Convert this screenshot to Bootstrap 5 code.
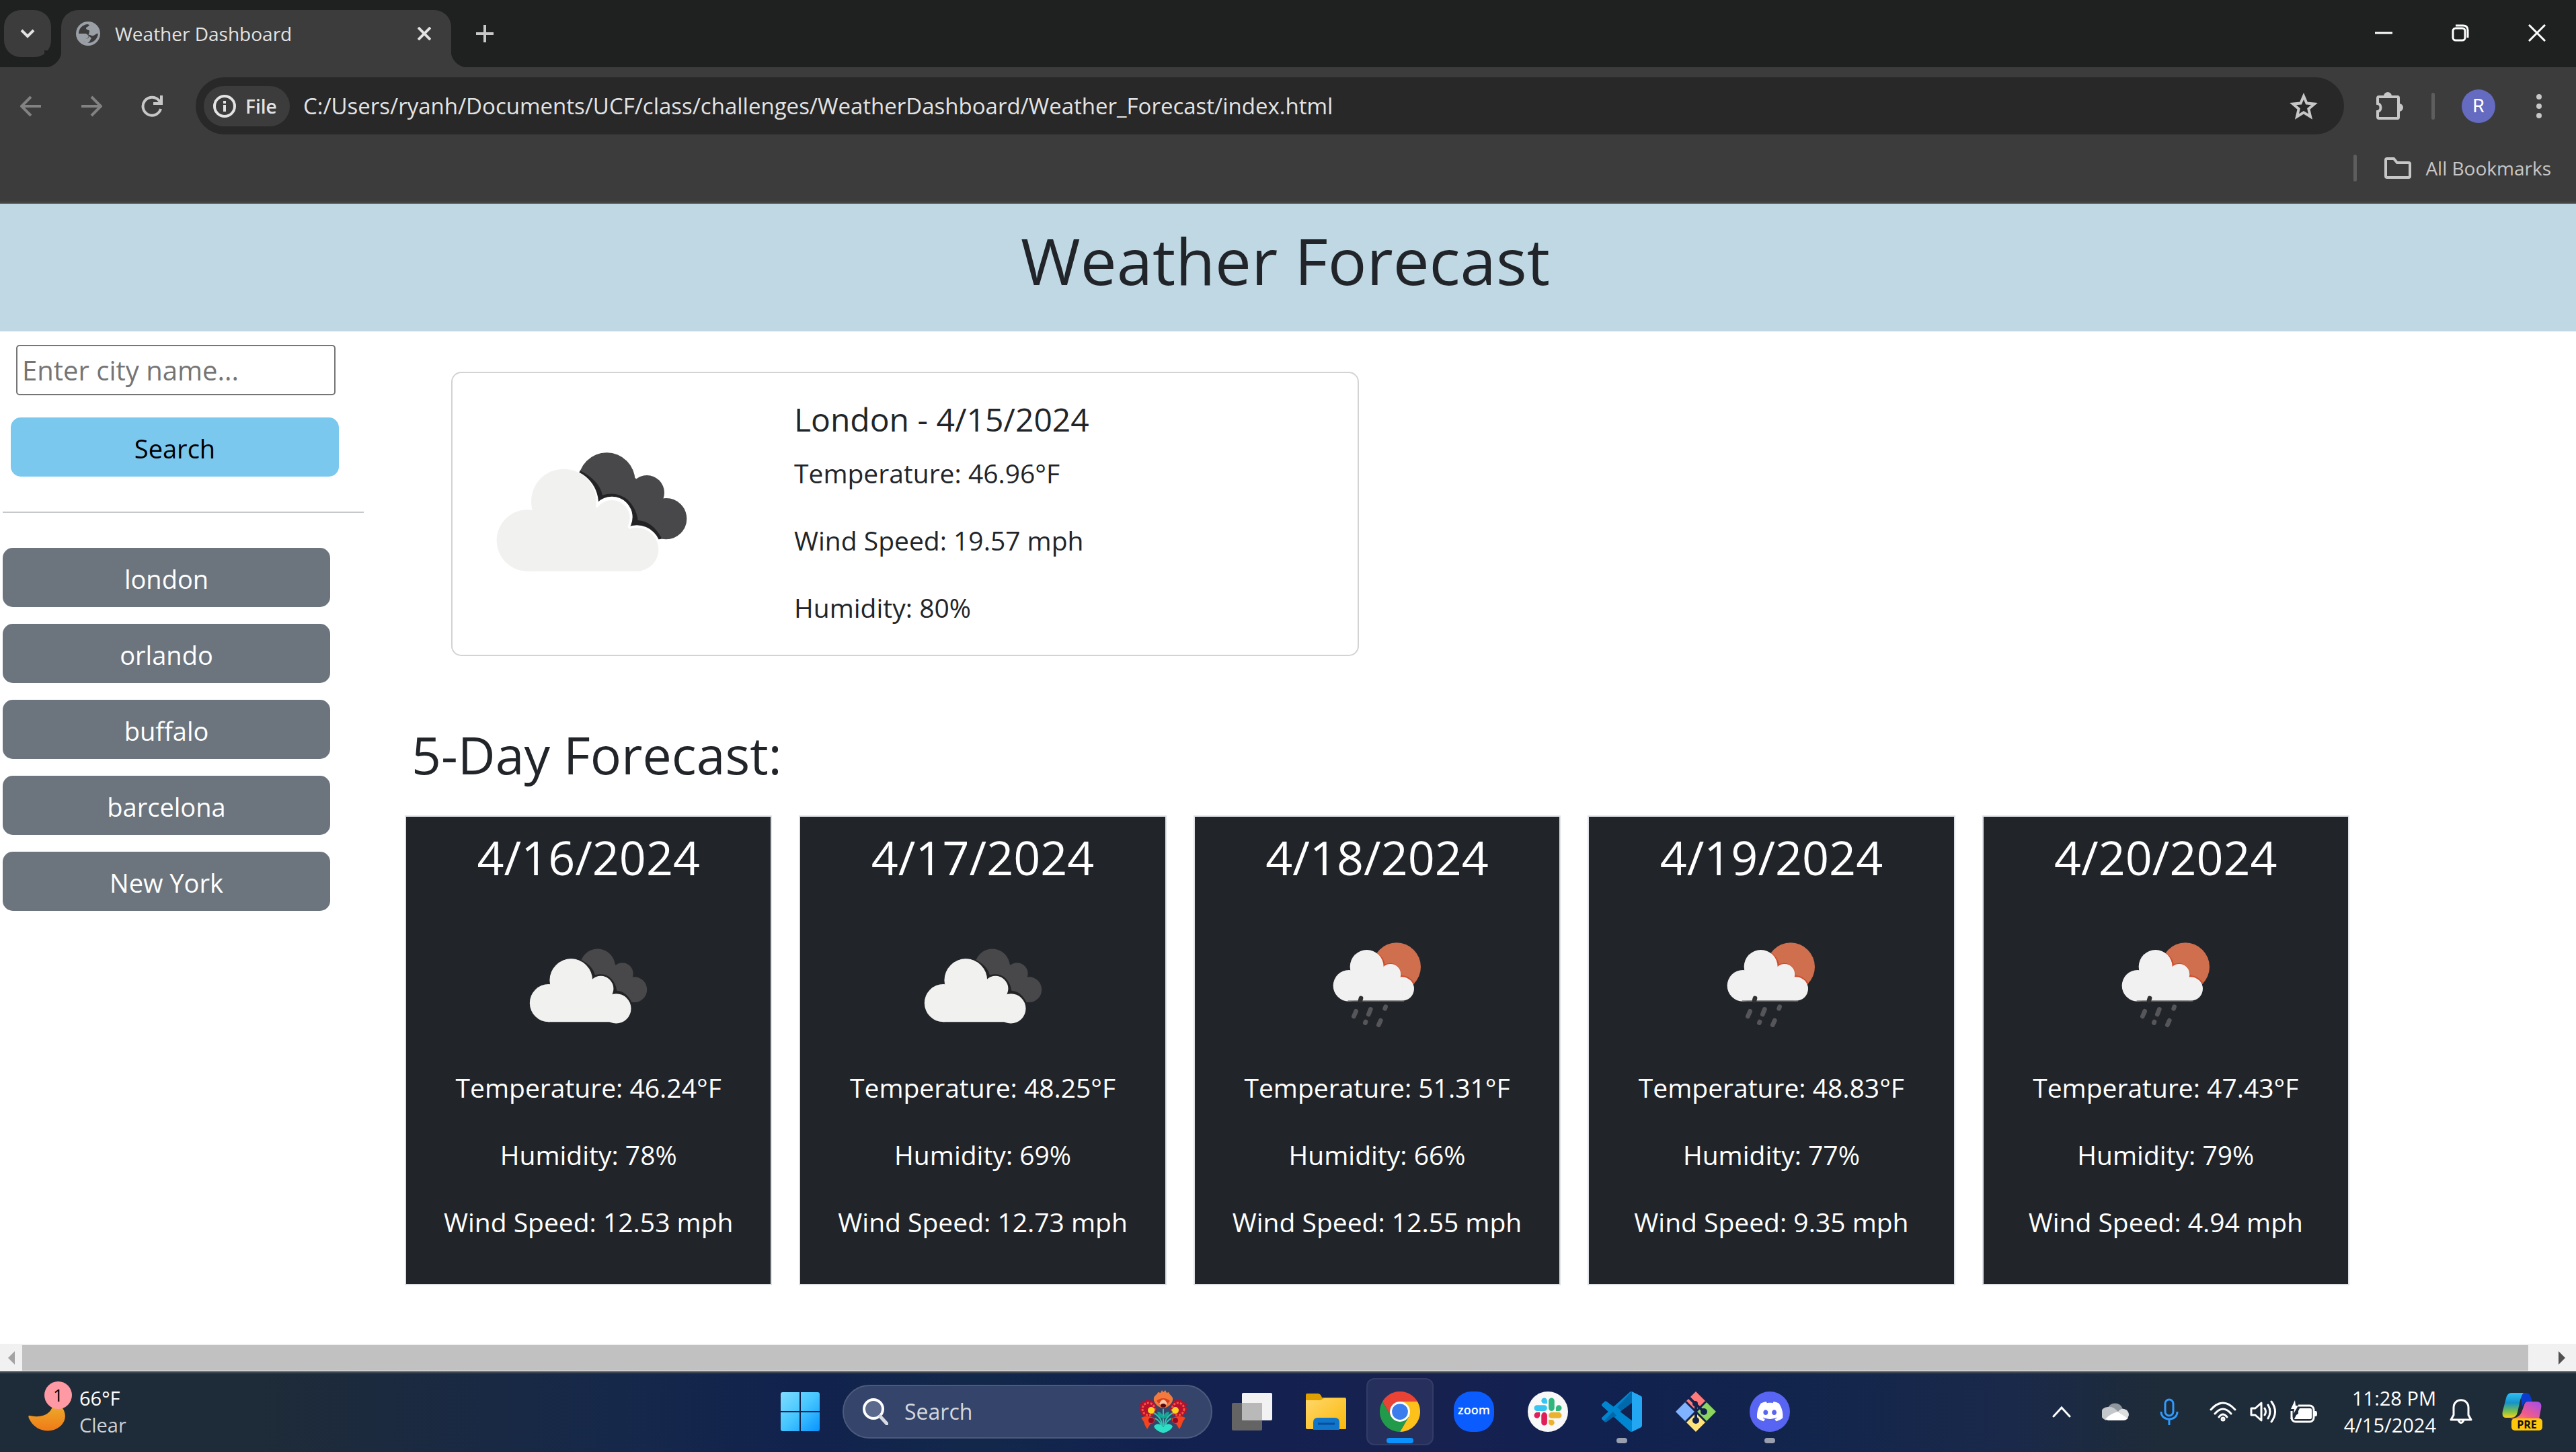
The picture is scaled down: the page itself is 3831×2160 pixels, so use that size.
<!DOCTYPE html>
<html lang="en">
<head>
<meta charset="utf-8">
<meta name="viewport" content="width=device-width, initial-scale=1">
<title>Weather Dashboard</title>
<link href="https://cdn.jsdelivr.net/npm/bootstrap@5.3.0/dist/css/bootstrap.min.css" rel="stylesheet">
<script src="https://cdn.jsdelivr.net/npm/bootstrap@5.3.0/dist/js/bootstrap.bundle.min.js" defer></script>
<style>
body{min-height:100vh;font-family:"Open Sans","Noto Sans",sans-serif;background:#fff;color:#212529;overflow-x:hidden}
svg{display:block;flex:none}
.plain-btn{border:0;background:none;padding:0;color:inherit;display:flex;align-items:center;justify-content:center;flex:none}

/* browser window */
.browser-top{background:#3c3c3c;color:#e3e3e3;border-bottom:3px solid #464646}
.tab-strip{background:#1f2120;height:100px;padding-left:6px}
.tab-search{width:70px;height:70px;margin-top:15px;border-radius:25px;background:#3c3c3c}
.page-tab{width:580px;height:85px;margin:15px 37px 0 15px;padding:0 30px 15px 22px;border-radius:25px 25px 0 0;background:#3c3c3c;font-size:28px;position:relative}
.page-tab::before,.page-tab::after{content:"";position:absolute;bottom:0;width:25px;height:25px}
.page-tab::before{right:100%;background:radial-gradient(circle at 0 0,#1f2120 25px,#3c3c3c 26px)}
.page-tab::after{left:100%;background:radial-gradient(circle at 100% 0,#1f2120 25px,#3c3c3c 26px)}
.tab-title{padding-left:22px}
.win-controls{padding-right:1px;color:#fff}
.win-controls .plain-btn{width:114px;height:98px}
.tool-row{height:115px;padding:0 45px 0 1px}
.tool-row>.v-line{margin-left:41px}
.nav-btn{width:90px;height:80px}
.address{height:85px;border-radius:43px;background:#282828;margin:0 47px 0 20px;padding:0 39px 0 12px}
.file-chip{width:128px;height:60px;border-radius:30px;background:#3c3c3c;font-size:28px;font-weight:600;margin-right:20px;padding-left:14px;justify-content:flex-start;gap:14px}
.url-box{border:0;background:none;color:#e3e3e3;font-size:33px;padding:0;min-width:0;outline:0}
.v-line{width:5px;height:40px;border-radius:3px;background:#5e5e5e}
.avatar{width:50px;height:50px;border-radius:50%;background:#646bc0;color:#fff;font-family:Roboto,sans-serif;font-size:28px;margin:0 55px 0 40px}
.bookmark-row{height:85px;padding:0 37px 15px 0;font-size:28px;color:#c7c7c7}

/* dashboard */
.hero{background:#bfd8e3;padding:24px 0 46px}
.hero h1{font-size:96px;line-height:120px;font-weight:400;margin:0 8px 0 0}
.dash{padding-right:337px}
.side{flex:0 0 602px;padding:20px 61px 0 4px}
.city-box{width:475px;height:75px;margin:0 0 33px 20px;border:2px solid #767676;border-radius:5px;font-size:40px;padding:0 0 0 7px;color:#212529}
.city-box::placeholder{color:#757575;opacity:1}
.city-list{gap:25px}
.city-btn{width:487px;font-size:38px;line-height:60px;padding:16px 0 12px;border:0;border-radius:15px;color:#fff}
.find-btn{width:488px;margin-left:12px;background:#7ac8ee;color:#000}
.find-btn:hover{background:#7ac8ee;color:#000}
.side hr{margin:52px 0;border-top:2px solid #212529}
.now-card{width:1350px;margin:60px 0 0 69px;border:2px solid #d3d3d3;border-radius:15px;padding:39px 0 0 27px}
.now-card .cloud-pic{margin:46px 121px 0 0}
.now-card h5{font-size:48px;line-height:60px;margin:0 0 20px;font-weight:400}
.fact{font-size:39px;line-height:60px;margin:0 0 40px}
.five-title{font-size:77px;line-height:96px;font-weight:400;margin:99px 0 42px 10px}
.day-list{gap:40px}
.day-card{flex:1 1 0;background:#212529;color:#fff;border:2px solid #dee2e6;padding:18px 0 22px;text-align:center}
.day-card h3{font-size:70px;line-height:84px;margin:0 0 74px;font-weight:400}
.day-icon{height:150px;margin-bottom:47px}

/* bottom scroll bar */
.scroll-strip{height:41px;background:#f1f1f1;padding:2px 0 1px}
.scroll-strip .plain-btn{width:33px}
.scroll-strip .last-btn{width:71px;padding-left:28px}
.scroll-thumb{background:#c1c1c1}

/* taskbar */
.taskbar{height:120px;padding-right:9px;box-shadow:inset 0 3px #3f4852;color:#fff;font-size:29px;line-height:40px;background:linear-gradient(90deg,#1e2b38 0%,#1e2b38 10%,#16284a 24%,#11224d 31%,#12284a 38%,#11214f 45%,#172150 55%,#112150 62%,#12254c 70%,#1a294a 78%,#1e2b38 84%)}
.task-side{flex:1 1 0;padding:0 41px}
.moon{position:relative;width:66px;height:80px;margin-right:11px}
.moon .count{position:absolute;left:25px;top:-5px;width:41px;height:41px;border-radius:50%;background:#ff99a4;color:#000;text-align:center;font-size:26px}
.sky{color:#cdd0d4}
.app-row{gap:10px}
.app-slot{width:100px;height:100px;position:relative;border-radius:12px}
.app-slot.on{background:#ffffff12;border:2px solid #ffffff10}
.app-dot{position:absolute;bottom:3px;left:50%;margin-left:-8px;width:16px;height:8px;border-radius:4px;background:#9a9fb0}
.on .app-dot{width:40px;margin-left:-20px;bottom:1px;background:#0a93ff}
.task-search{width:550px;height:80px;border-radius:40px;background:#34446a;border:2px solid #4c5a7c;margin:0 -1px 0 3px;padding:0 35px 0 28px}
.task-search input{border:0;background:none;outline:0;padding:0;min-width:0;font-size:32px;color:#d5d8df}
.task-search input::placeholder{color:#d5d8df;opacity:1}
.tray{gap:20px}
.tray-lone{margin-right:26px}
.tray-set{gap:20px;margin-right:20px}
.copilot{margin-left:24px}
</style>
</head>
<body class="d-flex flex-column">

<svg width="0" height="0" class="position-absolute" aria-hidden="true">
  <symbol id="clouds-day" viewBox="0 0 1080 720">
    <g fill="#48484a"><circle cx="607" cy="227" r="127"/><circle cx="786" cy="279" r="78"/><circle cx="872" cy="395" r="92"/><path d="M520 260 720 200 870 340 850 487 700 440z"/></g>
    <g fill="#232326"><path d="M488 180Q575 225 588 290Q650 270 700 310Q740 350 746 402Q810 405 852 482L810 500 700 430 560 340 470 220z"/></g>
    <g><circle cx="415" cy="327" r="155"/><circle cx="630" cy="388" r="92"/><circle cx="741" cy="532" r="108"/></g>
    <g fill="#f1f1ef"><circle cx="415" cy="318" r="145"/><circle cx="253" cy="492" r="137"/><circle cx="630" cy="392" r="80"/><circle cx="741" cy="532" r="97"/><path d="M250 400 415 330 630 350 760 500V629H250z"/></g>
  </symbol>
  <symbol id="rain-day" viewBox="-5 30 540 450">
    <circle cx="352" cy="172" r="108" fill="#cf6f4d"/>
    <g fill="#d2492a"><path d="M268 110Q298 135 300 160Q330 148 352 165Q372 180 375 210Q410 212 432 245L400 270 300 200 250 150Z"/></g>
    <g fill="#f1f1f1"><circle cx="219" cy="171" r="75"/><circle cx="139" cy="256" r="70"/><circle cx="325" cy="205" r="46"/><circle cx="377" cy="270" r="53"/><path d="M139 200 219 160 325 190 377 240V323H135z"/></g>
    <path d="M135 324H385" stroke="#777" stroke-width="4"/>
    <g stroke="#56565a" stroke-width="20" stroke-linecap="round"><path d="M171 370 161 393M236 361 227 384M281 411 272 431M303 350 300 358M214 417 212 422"/><path d="M193 312 190 322" stroke="#303033"/></g>
  </symbol>
</svg>

<header class="browser-top">
  <div class="tab-strip d-flex">
    <button class="plain-btn tab-search" aria-label="Search tabs"><svg width="24" height="16" viewBox="0 0 24 16" fill="none" stroke="#e3e3e3" stroke-width="4"><path d="M3 3 12 12 21 3"/></svg></button>
    <div class="page-tab d-flex align-items-center">
      <svg width="36" height="36" viewBox="0 0 36 36"><circle cx="18" cy="18" r="18" fill="#9aa0a6"/><path d="M4 18C4 11 9 5 17 4L20 5C19 8 15 8 15 10C15 13 20 12 20 14C20 17 18 20 18 22C20 23 18 26 14 26V31C8 29 12 27 11 24C7 24 4 21 4 18ZM18 20C21 19 23 22 26 21C29 20 29 18 33 18C32 26 26 32 17 32C20 31 21 28 22 26C25 24 19 23 18 20Z" fill="#3c3c3c"/><path d="M4 18H13C16 18 19 20 18 23C18 25 16 26 14 26V31C8 29 4 24 4 18Z" fill="#9aa0a6"/></svg>
      <span class="flex-grow-1 tab-title">Weather Dashboard</span>
      <button class="plain-btn" aria-label="Close tab"><svg width="20" height="20" viewBox="0 0 20 20" stroke="#e3e3e3" stroke-width="4"><path d="M1 1 19 19M19 1 1 19"/></svg></button>
    </div>
    <button class="plain-btn" aria-label="New tab"><svg width="26" height="26" viewBox="0 0 26 26" stroke="#c7c7c7" stroke-width="4"><path d="M13 0V26M0 13H26"/></svg></button>
    <div class="win-controls d-flex ms-auto">
      <button class="plain-btn" aria-label="Minimize"><svg width="26" height="26" viewBox="0 0 26 26" stroke="#fff" stroke-width="3"><path d="M0 13H26"/></svg></button>
      <button class="plain-btn" aria-label="Restore"><svg width="26" height="26" viewBox="0 0 26 26" fill="none" stroke="#fff" stroke-width="3"><rect x="2" y="6" width="18" height="18" rx="4"/><path d="M6 2H17Q24 2 24 9V20"/></svg></button>
      <button class="plain-btn" aria-label="Close"><svg width="26" height="26" viewBox="0 0 26 26" stroke="#fff" stroke-width="3"><path d="M1 1 25 25M25 1 1 25"/></svg></button>
    </div>
  </div>
  <div class="tool-row d-flex align-items-center">
    <button class="plain-btn nav-btn" aria-label="Back"><svg width="32" height="32" viewBox="0 0 32 32" fill="none" stroke="#828282" stroke-width="4"><path d="M31 16H3M16 2 2 16 16 30"/></svg></button>
    <button class="plain-btn nav-btn" aria-label="Forward"><svg width="32" height="32" viewBox="0 0 32 32" fill="none" stroke="#828282" stroke-width="4"><path d="M1 16H29M16 2 30 16 16 30"/></svg></button>
    <button class="plain-btn nav-btn" aria-label="Reload"><svg width="32" height="32" viewBox="0 0 32 32" fill="none" stroke="#c7c7c7" stroke-width="4"><path d="M29 20A13.500 13.500 0 1 1 26 7L29 11M30 0V12H18"/></svg></button>
    <div class="address d-flex align-items-center flex-grow-1">
      <button class="plain-btn file-chip"><svg width="34" height="34" viewBox="0 0 34 34" fill="none" stroke="#e3e3e3" stroke-width="4"><circle cx="17" cy="17" r="15"/><path d="M17 15V25M17 9V13"/></svg><span>File</span></button>
      <input class="url-box flex-grow-1" aria-label="Address" value="C:/Users/ryanh/Documents/UCF/class/challenges/WeatherDashboard/Weather_Forecast/index.html">
      <button class="plain-btn" aria-label="Bookmark this page"><svg width="42" height="40" viewBox="0 0 42 40" fill="none" stroke="#c7c7c7" stroke-width="4"><path d="M21 5 25.500 15.500 37 16.500 28.300 24 31 35.500 21 29.300 11 35.500 13.700 24 5 16.500 16.500 15.500Z"/></svg></button>
    </div>
    <button class="plain-btn" aria-label="Extensions"><svg width="42" height="42" viewBox="0 0 42 42" fill="none" stroke="#c7c7c7" stroke-width="4"><path d="M5 7H33Q34 7 34 9V37Q34 39 33 39H5Q3 39 3 37V29C9 28 9 18 3 17V9Q3 7 5 7Z"/><path d="M14 6a4 4 0 0 1 8 0ZM35 19a4 4 0 0 1 0 8Z" fill="#c7c7c7"/></svg></button>
    <div class="v-line"></div>
    <button class="plain-btn avatar" aria-label="Profile">R</button>
    <button class="plain-btn" aria-label="Menu"><svg width="20" height="40" viewBox="0 0 20 40" fill="#c7c7c7"><circle cx="10" cy="6" r="4"/><circle cx="10" cy="20" r="4"/><circle cx="10" cy="34" r="4"/></svg></button>
  </div>
  <div class="bookmark-row d-flex align-items-center justify-content-end">
    <div class="v-line me-4"></div>
    <button class="plain-btn ms-3"><svg width="42" height="34" viewBox="0 0 42 34" fill="none" stroke="#c7c7c7" stroke-width="4"><path d="M5 3H15L20 9H37Q39 9 39 11V29Q39 31 37 31H5Q3 31 3 29V5Q3 3 5 3Z"/></svg><span class="ps-3 ms-1">All Bookmarks</span></button>
  </div>
</header>

<main class="flex-grow-1">
  <div class="hero text-center"><h1>Weather Forecast</h1></div>
  <div class="dash d-flex">
    <aside class="side">
      <form onsubmit="return false">
        <input type="text" id="city" class="city-box d-block" placeholder="Enter city name..." aria-label="City name">
        <button class="btn city-btn find-btn">Search</button>
      </form>
      <hr>
      <div class="city-list d-flex flex-column">
        <button class="btn btn-secondary city-btn">london</button>
        <button class="btn btn-secondary city-btn">orlando</button>
        <button class="btn btn-secondary city-btn">buffalo</button>
        <button class="btn btn-secondary city-btn">barcelona</button>
        <button class="btn btn-secondary city-btn">New York</button>
      </div>
    </aside>
    <section class="flex-grow-1">
      <div class="card now-card flex-row">
        <svg class="cloud-pic" width="360" height="240" fill="#fff"><use href="#clouds-day"/></svg>
        <div>
          <h5>London - 4/15/2024</h5>
          <p class="fact">Temperature: 46.96°F</p>
          <p class="fact">Wind Speed: 19.57 mph</p>
          <p class="fact">Humidity: 80%</p>
        </div>
      </div>
      <h2 class="five-title">5-Day Forecast:</h2>
      <div class="day-list d-flex">
        <article class="day-card">
          <h3>4/16/2024</h3>
          <div class="day-icon d-flex justify-content-center"><svg width="222" height="148" fill="#f1f1ef"><use href="#clouds-day"/></svg></div>
          <p class="fact">Temperature: 46.24°F</p><p class="fact">Humidity: 78%</p><p class="fact">Wind Speed: 12.53 mph</p>
        </article>
        <article class="day-card">
          <h3>4/17/2024</h3>
          <div class="day-icon d-flex justify-content-center"><svg width="222" height="148" fill="#f1f1ef"><use href="#clouds-day"/></svg></div>
          <p class="fact">Temperature: 48.25°F</p><p class="fact">Humidity: 69%</p><p class="fact">Wind Speed: 12.73 mph</p>
        </article>
        <article class="day-card">
          <h3>4/18/2024</h3>
          <div class="day-icon d-flex justify-content-center"><svg width="180" height="150"><use href="#rain-day"/></svg></div>
          <p class="fact">Temperature: 51.31°F</p><p class="fact">Humidity: 66%</p><p class="fact">Wind Speed: 12.55 mph</p>
        </article>
        <article class="day-card">
          <h3>4/19/2024</h3>
          <div class="day-icon d-flex justify-content-center"><svg width="180" height="150"><use href="#rain-day"/></svg></div>
          <p class="fact">Temperature: 48.83°F</p><p class="fact">Humidity: 77%</p><p class="fact">Wind Speed: 9.35 mph</p>
        </article>
        <article class="day-card">
          <h3>4/20/2024</h3>
          <div class="day-icon d-flex justify-content-center"><svg width="180" height="150"><use href="#rain-day"/></svg></div>
          <p class="fact">Temperature: 47.43°F</p><p class="fact">Humidity: 79%</p><p class="fact">Wind Speed: 4.94 mph</p>
        </article>
      </div>
    </section>
  </div>
</main>

<div class="scroll-strip d-flex">
  <button class="plain-btn" aria-label="Scroll left"><svg width="10" height="20" viewBox="0 0 10 20" fill="#a3a3a3"><path d="M10 0V20L0 10z"/></svg></button>
  <div class="scroll-thumb flex-grow-1"></div>
  <button class="plain-btn last-btn" aria-label="Scroll right"><svg width="10" height="20" viewBox="0 0 10 20" fill="#505050"><path d="M0 0V20L10 10z"/></svg></button>
</div>

<footer class="taskbar d-flex align-items-center">
  <div class="task-side d-flex align-items-center">
    <div class="moon">
      <svg width="66" height="80" viewBox="6 0 66 80"><defs><linearGradient id="mg" x2="0" y2="1"><stop offset="0" stop-color="#ebb62f"/><stop offset="1" stop-color="#f07a17"/></linearGradient></defs><path d="M44 22C62 32 66 48 58 58C46 74 18 72 8 50Q6 45 10 46C26 50 46 44 44 22Z" fill="url(#mg)"/></svg>
      <span class="count">1</span>
    </div>
    <div><div>66°F</div><div class="sky">Clear</div></div>
  </div>

  <div class="app-row d-flex align-items-center">
    <button class="plain-btn app-slot" aria-label="Start"><svg width="58" height="58" viewBox="0 0 58 58"><defs><linearGradient id="wg" x2="1" y2="1" gradientUnits="userSpaceOnUse" gradientTransform="scale(58)"><stop offset="0" stop-color="#7fdcff"/><stop offset=".5" stop-color="#45c6ff"/><stop offset="1" stop-color="#0894ff"/></linearGradient></defs><path d="M3 0H28V28H0V3Q0 0 3 0ZM30 0H55Q58 0 58 3V28H30ZM0 30H28V58H3Q0 58 0 55ZM30 30H58V55Q58 58 55 58H30Z" fill="url(#wg)"/></svg></button>
    <label class="task-search d-flex align-items-center">
      <svg width="38" height="40" viewBox="0 0 38 40"><circle cx="16" cy="16" r="14" fill="#5b6a8c" stroke="#fff" stroke-width="4"/><path d="M26 27 36 38" stroke="#d8dbe2" stroke-width="5" stroke-linecap="round"/></svg>
      <input type="text" class="flex-grow-1 ms-4" placeholder="Search" aria-label="Search">
      <svg width="72" height="64" viewBox="0 0 72 64">
        <g fill="#b8102e" stroke="#b8102e" stroke-width="4" stroke-dasharray="3 2"><ellipse cx="13" cy="27" rx="11" ry="12"/><ellipse cx="59" cy="27" rx="11" ry="12"/></g>
        <g fill="none" stroke="#f2553f" stroke-width="3" stroke-dasharray="3 2"><circle cx="14" cy="28" r="9"/><circle cx="58" cy="28" r="9"/></g>
        <path d="M23 18C19 8 27 8 28 3L32 4 34 0 36 3 39 0 41 4 44 3C46 9 53 9 49 18Q44 26 36 27Q28 26 23 18Z" fill="#f37a3c"/><path d="M26 16Q36 8 46 16L40 23H32Z" fill="#d6401c"/><path d="M30 20Q36 8 42 20L36 27Z" fill="#ffc3a0"/><ellipse cx="36" cy="23" rx="4" ry="3" fill="#5a0710"/>
        <ellipse cx="18" cy="30" rx="5" ry="5" fill="#ffd21f"/><ellipse cx="54" cy="30" rx="5" ry="5" fill="#ffd21f"/>
        <path d="M3 41Q14 36 23 42Q24 49 17 50L12 58Q8 52 7 47ZM69 41Q58 36 49 42Q48 49 55 50L60 58Q64 52 65 47Z" fill="#f5431d"/><circle cx="18" cy="45" r="4" fill="#8d0b2a"/><circle cx="54" cy="45" r="4" fill="#8d0b2a"/>
        <path d="M36 54V28M34 54Q34 40 22 34M38 54Q38 40 50 34M33 54Q32 46 24 42M39 54Q40 46 48 42" stroke="#2cc4b0" stroke-width="2" fill="none"/><path d="M27 32Q34 32 36 40Q38 32 45 32Q44 40 36 43Q28 40 27 32Z" fill="#12a793"/><path d="M22 54Q28 46 36 55Q44 46 50 54Q48 60 36 64Q24 60 22 54Z" fill="#2be0c6"/>
      </svg>
    </label>
    <button class="plain-btn app-slot" aria-label="Task view"><svg width="60" height="56" viewBox="0 0 60 56"><rect x="0" y="15" width="45" height="41" rx="2" fill="#646464"/><rect x="15" y="0" width="45" height="41" rx="2" fill="#f2f2f2"/><path d="M15 15H45V41H17Q15 41 15 39Z" fill="#b9b9b9"/></svg></button>
    <button class="plain-btn app-slot" aria-label="File Explorer"><svg width="60" height="54" viewBox="0 0 60 54"><defs><linearGradient id="fg" x2="1" y2="1"><stop offset="0" stop-color="#ffd76b"/><stop offset="1" stop-color="#fab808"/></linearGradient></defs><path d="M0 2Q0 0 2 0H18Q22 0 24 6H58Q60 6 60 9V20H0Z" fill="#e0a000"/><path d="M0 10H22L27 7H58Q60 7 60 9V52Q60 53 58 53H2Q0 53 0 51Z" fill="url(#fg)"/><path d="M11 54V43Q11 36 18 36H43Q50 36 50 43V54Z" fill="#0f76cc"/><path d="M18 45H43" stroke="#0a4d97" stroke-width="3"/></svg></button>
    <button class="plain-btn app-slot on" aria-label="Chrome"><svg width="60" height="60" viewBox="0 0 48 48"><path d="M3.200 12A24 24 0 0 1 44.800 12H24L13.600 30Z" fill="#ea4335"/><path d="M44.800 12A24 24 0 0 1 24 48L34.400 30 24 12Z" fill="#fcc21b"/><path d="M24 48A24 24 0 0 1 3.200 12L13.600 30H34.400Z" fill="#219a49"/><circle cx="24" cy="24" r="12" fill="#fff"/><circle cx="24" cy="24" r="9.500" fill="#3b7ded"/></svg><span class="app-dot"></span></button>
    <button class="plain-btn app-slot" aria-label="Zoom"><svg width="60" height="60" viewBox="0 0 60 60"><rect width="60" height="60" rx="26" fill="#0b5cff"/><text x="30" y="34" text-anchor="middle" fill="#fff" font-family="Open Sans,sans-serif" font-weight="600" font-size="18">zoom</text></svg></button>
    <button class="plain-btn app-slot" aria-label="Slack"><svg width="60" height="60" viewBox="0 0 60 60"><defs><path id="sl" d="M5.042 15.165a2.528 2.528 0 0 1-2.520 2.523A2.528 2.528 0 0 1 0 15.165a2.527 2.527 0 0 1 2.522-2.520h2.520v2.520zM6.313 15.165a2.527 2.527 0 0 1 2.521-2.520 2.527 2.527 0 0 1 2.521 2.520v6.313A2.528 2.528 0 0 1 8.834 24a2.528 2.528 0 0 1-2.521-2.522v-6.313z"/></defs><circle cx="30" cy="30" r="30" fill="#f8f8f8"/><g transform="translate(9.500 9.500) scale(1.710)"><use href="#sl" fill="#e01e5a"/><use href="#sl" fill="#36c5f0" transform="rotate(90 12 12)"/><use href="#sl" fill="#2eb67d" transform="rotate(180 12 12)"/><use href="#sl" fill="#ecb22e" transform="rotate(270 12 12)"/></g></svg></button>
    <button class="plain-btn app-slot" aria-label="Visual Studio Code"><svg width="60" height="60" viewBox="0 0 24 24"><defs><path id="vs" d="M23.150 2.587L18.210.210a1.494 1.494 0 0 0-1.705.290l-9.460 8.630-4.120-3.128a.999.999 0 0 0-1.276.057L.327 7.261A1 1 0 0 0 .326 8.740L3.899 12 .326 15.260a1 1 0 0 0 .001 1.479L1.650 17.940a.999.999 0 0 0 1.276.057l4.120-3.128 9.460 8.630a1.492 1.492 0 0 0 1.704.290l4.942-2.377A1.500 1.500 0 0 0 24 20.060V3.939a1.500 1.500 0 0 0-.850-1.352zm-5.146 14.861L10.826 12l7.178-5.448v10.896z"/><clipPath id="vc"><use href="#vs"/></clipPath></defs><g clip-path="url(#vc)"><rect width="24" height="24" fill="#0086d1"/><path d="M0 19 18 0V7L3 19Z" fill="#0069ab"/><path d="M0 5 4 5 18 17V24Z" fill="#0086d1"/><path d="M18 0H24V24H18Z" fill="#23a7f2"/></g></svg><span class="app-dot"></span></button>
    <button class="plain-btn app-slot" aria-label="Git Bash"><svg width="60" height="60" viewBox="0 0 60 60"><g><path d="M30 0 45 15 30 30 15 15Z" fill="#ff7b7b"/><path d="M45 15 60 30 45 45 30 30Z" fill="#8cd65f"/><path d="M30 30 45 45 30 60 15 45Z" fill="#ffe37a"/><path d="M15 15 30 30 15 45 0 30Z" fill="#80b3ff"/></g><path d="M15 15 45 45M45 15 15 45" stroke="#12224e" stroke-width="3"/><path d="M18 7 30 19V43M30 19 42 30" stroke="#12224e" stroke-width="4" fill="none"/><circle cx="30" cy="43" r="5" fill="#12224e"/><circle cx="42" cy="30" r="5" fill="#12224e"/><circle cx="29" cy="18" r="4" fill="#12224e"/></svg></button>
    <button class="plain-btn app-slot" aria-label="Discord"><svg width="60" height="60" viewBox="0 0 60 60"><circle cx="30" cy="30" r="30" fill="#5865f2"/><path transform="translate(11 10.500) scale(1.600)" fill="#fff" d="M20.317 4.370a19.791 19.791 0 0 0-4.885-1.515.074.074 0 0 0-.079.037c-.211.375-.445.865-.608 1.250-1.845-.276-3.680-.276-5.487 0-.164-.393-.406-.874-.618-1.250a.077.077 0 0 0-.079-.037 19.736 19.736 0 0 0-4.885 1.515.070.070 0 0 0-.032.028C.533 9.046-.319 13.580.099 18.058a.082.082 0 0 0 .031.056c2.053 1.508 4.041 2.423 5.993 3.029a.078.078 0 0 0 .084-.028c.462-.630.873-1.295 1.226-1.994a.076.076 0 0 0-.042-.106c-.653-.248-1.274-.550-1.872-.892a.077.077 0 0 1-.008-.128c.126-.094.252-.192.372-.291a.074.074 0 0 1 .078-.011c3.928 1.793 8.180 1.793 12.061 0a.074.074 0 0 1 .079.010c.120.099.246.198.373.292a.077.077 0 0 1-.007.128 12.299 12.299 0 0 1-1.873.891.077.077 0 0 0-.041.107c.360.698.772 1.363 1.225 1.993a.076.076 0 0 0 .084.029c1.961-.607 3.950-1.522 6.002-3.029a.077.077 0 0 0 .031-.055c.500-5.177-.838-9.674-3.549-13.660a.061.061 0 0 0-.031-.029zM8.020 15.331c-1.183 0-2.157-1.086-2.157-2.419 0-1.333.956-2.419 2.157-2.419 1.211 0 2.176 1.095 2.157 2.419 0 1.333-.956 2.419-2.157 2.419zm7.975 0c-1.183 0-2.157-1.086-2.157-2.419 0-1.333.955-2.419 2.157-2.419 1.211 0 2.176 1.095 2.157 2.419 0 1.333-.946 2.419-2.157 2.419Z"/></svg><span class="app-dot"></span></button>
  </div>

  <div class="task-side tray d-flex align-items-center justify-content-end">
    <button class="plain-btn tray-lone" aria-label="Hidden icons"><svg width="28" height="18" viewBox="0 0 28 18" fill="none" stroke="#fff" stroke-width="3" stroke-linecap="round"><path d="M2 16 14 3 26 16"/></svg></button>
    <button class="plain-btn tray-lone" aria-label="OneDrive"><svg width="40" height="26" viewBox="0 0 40 26"><path d="M8 9A12 12 0 0 1 31 9L24 14Z" fill="#8f959c"/><path d="M8 26A9 9 0 0 1 9 6Q16 4 24 13L5 26Z" fill="#c3c6ca"/><path d="M24 13Q28 8 33 9Q40 11 40 18L38 24Z" fill="#dcdee0"/><path d="M5 24Q12 16 24 13L38 23Q36 26 32 26H9Z" fill="#fff"/></svg></button>
    <button class="plain-btn tray-lone" aria-label="Microphone"><svg width="28" height="40" viewBox="0 0 28 40" fill="none" stroke="#2f9bff" stroke-width="3"><rect x="8" y="2" width="12" height="24" rx="6"/><path d="M2 20C2 35 26 35 26 20M14 31V40"/></svg></button>
    <button class="plain-btn tray-set" aria-label="Network, volume and battery">
      <svg width="40" height="30" viewBox="0 0 40 30" fill="none" stroke="#fff" stroke-width="3" stroke-linecap="round"><path d="M2 12Q20-8 38 12M8 18Q20 4 32 18M14 23Q20 15 26 23"/><circle cx="20" cy="26" r="2"/></svg>
      <svg width="40" height="34" viewBox="0 0 40 34" fill="none" stroke="#fff" stroke-width="3" stroke-linejoin="round" stroke-linecap="round"><path d="M2 12H8L17 4V30L8 22H2ZM22 12Q25 17 22 22M27 7Q33 17 27 27M32 2Q43 17 32 32"/></svg>
      <svg width="40" height="34" viewBox="0 0 40 34"><rect x="2" y="8" width="33" height="24" rx="6" fill="none" stroke="#fff" stroke-width="3"/><path d="M14 12H30Q32 12 32 14V26Q32 28 30 28H6Q10 20 14 12Z" fill="#fff"/><path d="M36 16H38Q40 16 40 20T38 24H36Z" fill="#fff"/><path d="M0 2H12V20L2 26H0Z" fill="#1e2b38"/><path d="M7 0 1 13H6L5 20 12 8H8Z" fill="#fff"/><path d="M2 16V28" stroke="#fff" stroke-width="3"/></svg>
    </button>
    <div class="text-end">11:28 PM<br>4/15/2024</div>
    <button class="plain-btn" aria-label="Notifications"><svg width="34" height="38" viewBox="0 0 34 38" fill="none" stroke="#fff" stroke-width="3" stroke-linejoin="round"><path d="M2 31 6 24V13C6-2 28-2 28 13V24L32 31ZM13 32Q17 39 21 32"/></svg></button>
    <button class="plain-btn copilot" aria-label="Copilot"><svg width="60" height="58" viewBox="0 0 60 58"><defs><linearGradient id="c1" x2="0" y2="1"><stop offset="0" stop-color="#2fc0f5"/><stop offset=".4" stop-color="#1693c9"/><stop offset=".75" stop-color="#7cc04a"/><stop offset="1" stop-color="#ffd21a"/></linearGradient><linearGradient id="c2" x1="1" x2="0" y2="1"><stop offset="0" stop-color="#a24df0"/><stop offset=".6" stop-color="#f05a8c"/><stop offset="1" stop-color="#ff9052"/></linearGradient></defs><path d="M27 1H36Q41 1 43 8L45 14H38Q32 14 30 22Z" fill="#0b3cd0"/><path d="M14 1H32Q29 4 27 12L23 30Q21 38 14 38H6Q-1 38 1 28L6 9Q8 1 14 1Z" fill="url(#c1)"/><path d="M39 14H51Q60 14 58 24L55 40H12Q26 38 29 30L33 19Q34 14 39 14Z" fill="url(#c2)"/><rect x="14" y="39" width="46" height="18" rx="5" fill="#ffc60a"/><text x="37" y="54" text-anchor="middle" font-family="Open Sans,sans-serif" font-weight="700" font-size="16" fill="#111">PRE</text></svg></button>
  </div>
</footer>
</body>
</html>
